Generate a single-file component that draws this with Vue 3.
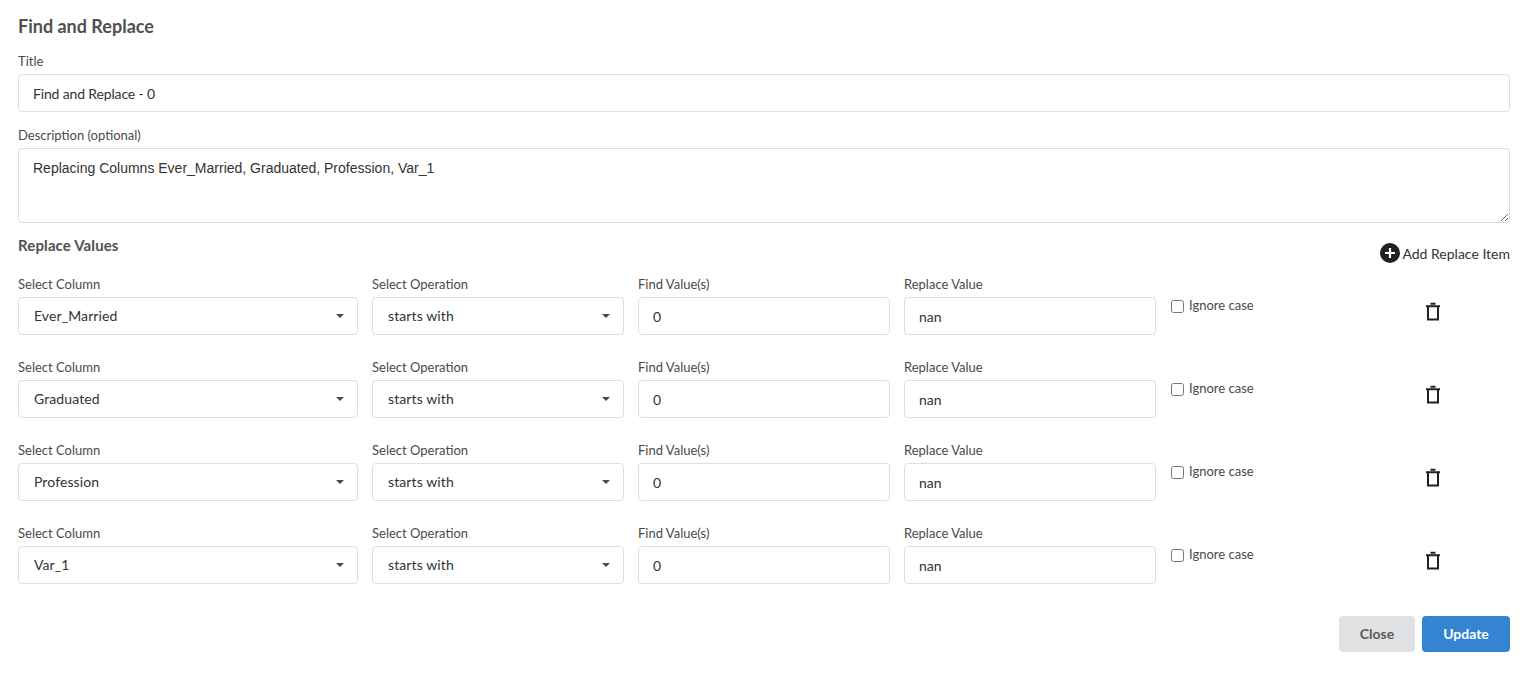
<template>
  <div class="panel">
    <h2>Find and Replace</h2>

    <label class="field-label">Title</label>
    <input v-model="title" class="text-input title-input" type="text" />

    <label class="field-label desc-label">Description (optional)</label>
    <textarea v-model="description" class="desc-input"></textarea>

    <!-- Kopfzeile der Ersetzungen -->
    <div class="values-head">
      <h4>Replace Values</h4>
      <a class="add-item">
        <svg width="20" height="20" viewBox="0 0 20 20">
          <circle cx="10" cy="10" r="10" fill="#212121" />
          <path d="M10 5v10M5 10h10" stroke="#fff" stroke-width="2.2" />
        </svg>
        Add Replace Item
      </a>
    </div>

    <div v-for="item in items" :key="item.column" class="value-row">
      <div class="cell">
        <label class="field-label">Select Column</label>
        <div class="select-wrap">
          <select v-model="item.column">
            <option v-for="c in columns" :key="c" :value="c">{{ c }}</option>
          </select>
          <span class="caret"></span>
        </div>
      </div>
      <div class="cell">
        <label class="field-label">Select Operation</label>
        <div class="select-wrap">
          <select v-model="item.operation">
            <option value="starts with">starts with</option>
            <option value="ends with">ends with</option>
            <option value="contains">contains</option>
          </select>
          <span class="caret"></span>
        </div>
      </div>
      <div class="cell">
        <label class="field-label">Find Value(s)</label>
        <input v-model="item.find" class="text-input" type="text" />
      </div>
      <div class="cell">
        <label class="field-label">Replace Value</label>
        <input v-model="item.replace" class="text-input" type="text" />
      </div>
      <div class="row-extra">
        <label class="ignore">
          <input v-model="item.ignoreCase" type="checkbox" />
          Ignore case
        </label>
        <button class="trash" type="button" aria-label="Delete">
          <svg width="16" height="20" viewBox="0 0 16 20">
            <path d="M5.5 1.8h5M1 4.2h14" stroke="#212121" stroke-width="2" fill="none" />
            <path d="M3 5v12.6h10V5" stroke="#212121" stroke-width="2" fill="none" />
          </svg>
        </button>
      </div>
    </div>

    <div class="actions">
      <button class="btn btn-close" type="button">Close</button>
      <button class="btn btn-update" type="button">Update</button>
    </div>
  </div>
</template>

<script setup>
import { ref } from 'vue';

const title = ref('Find and Replace - 0');
const description = ref('Replacing Columns Ever_Married, Graduated, Profession, Var_1');
const columns = ['Ever_Married', 'Graduated', 'Profession', 'Var_1'];

const items = ref(columns.map(column => ({
  column,
  operation: 'starts with',
  find: '0',
  replace: 'nan',
  ignoreCase: false
})));
</script>

<style>
html, body {
  background: #fff;
}
</style>

<style scoped>
.panel {
  box-sizing: border-box;
  height: 685px;
  padding: 16px 17px 0 18px;
  font-family: Lato, "Open Sans", sans-serif;
  color: #4a4a4a;
  overflow: hidden;
}

h2 {
  margin: 0 0 18px;
  font-size: 18px;
  line-height: 21px;
  font-weight: 700;
  color: #505050;
}

h4 {
  margin: 0;
  font-size: 15px;
  line-height: 17px;
  font-weight: 700;
  letter-spacing: 0.12px;
  color: #505050;
}

.field-label {
  display: block;
  height: 13px;
  margin-bottom: 6px;
  font-size: 13px;
  line-height: 13px;
  color: #4a4a4a;
}

.desc-label {
  margin-top: 17px;
}

.text-input,
.desc-input,
select {
  display: block;
  box-sizing: border-box;
  width: 100%;
  border: 1px solid #dededf;
  border-radius: 4px;
  background: #fff;
  outline: none;
  color: #333;
  font-size: 14px;
}

.text-input {
  height: 38px;
  padding: 0 14px;
  font-family: Lato, sans-serif;
}

.title-input {
  letter-spacing: -0.15px;
}

.desc-input {
  height: 75px;
  padding: 10px 14px;
  font-family: "Liberation Sans", Arial, sans-serif;
  line-height: 18px;
  resize: vertical;
}

.values-head {
  display: flex;
  justify-content: space-between;
  align-items: flex-start;
  margin-top: 14px;
  height: 41px;
}

.add-item {
  display: flex;
  align-items: center;
  gap: 2px;
  margin-top: 6px;
  font-size: 14px;
  color: #333;
}

.value-row {
  display: grid;
  grid-template-columns: 340px 252px 252px 252px 1fr;
  column-gap: 14px;
  height: 83px;
}

.select-wrap {
  position: relative;
}

select {
  height: 38px;
  padding: 0 30px 2px 15px;
  font-family: Lato, sans-serif;
  letter-spacing: 0.1px;
  appearance: none;
}

.caret {
  position: absolute;
  top: 17px;
  right: 14px;
  width: 0;
  height: 0;
  border-left: 4px solid transparent;
  border-right: 4px solid transparent;
  border-top: 4px solid #4a4a4a;
  pointer-events: none;
}

.row-extra {
  display: flex;
  align-items: flex-start;
}

.ignore {
  display: flex;
  align-items: center;
  gap: 5px;
  margin-top: 19px;
  font-size: 13px;
  line-height: 16px;
  color: #4a4a4a;
}

.ignore input {
  width: 13px;
  height: 13px;
  margin: 3px 0 0 1px;
}

.trash {
  margin: 24px 0 0 171px;
  padding: 0;
  border: 0;
  background: none;
  line-height: 0;
}

.actions {
  display: flex;
  justify-content: flex-end;
  gap: 7px;
  margin-top: 6px;
}

.btn {
  height: 36px;
  padding: 0 0 2px;
  border: 0;
  border-radius: 4px;
  font-family: Lato, sans-serif;
  font-size: 14px;
  font-weight: 700;
}

.btn-close {
  width: 76px;
  background: #e0e1e2;
  color: #5a5a5a;
}

.btn-update {
  width: 88px;
  background: #3484d2;
  color: #fff;
}
</style>
